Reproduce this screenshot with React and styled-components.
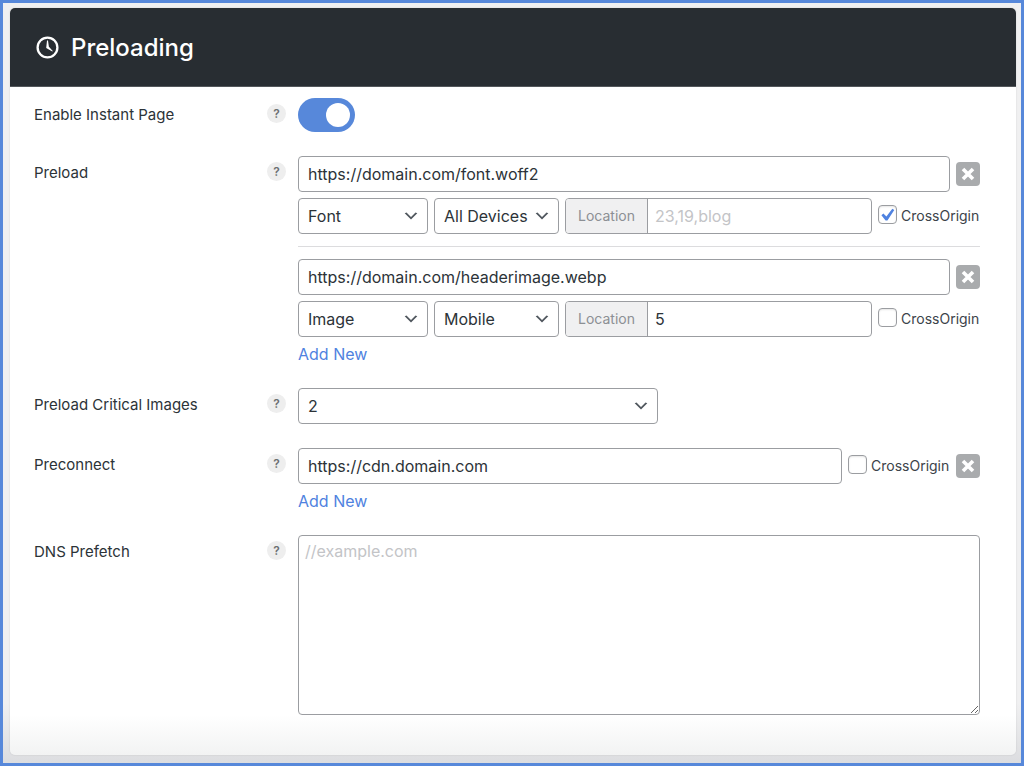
import React from "react";
import styled, { createGlobalStyle } from "styled-components";

const GlobalStyle = createGlobalStyle`
  *, *::before, *::after { box-sizing: border-box; }
  body {
    margin: 0;
    background: #f0f0f1;
    color: #2c3338;
    font-family: Inter, "Liberation Sans", sans-serif;
    font-size: 15px;
    line-height: 20px;
  }
  input, select, textarea, button { font-family: inherit; color: inherit; margin: 0; }
`;

const Frame = styled.div`
  min-height: 100vh;
  display: flex;
  border: 3px solid #5788da;
  padding: 5px 5px 8px 7px;
  background: linear-gradient(to bottom, #f0f0f1 calc(100% - 60px), #dcdde0);
`;

const Card = styled.main`
  flex: 1;
  min-width: 0;
  display: flex;
  flex-direction: column;
  border-radius: 5px;
  overflow: hidden;
  background: linear-gradient(to bottom, #fff calc(100% - 40px), #f2f3f3);
  box-shadow: 0 0 2px rgba(0, 0, 0, 0.12);
`;

const Header = styled.header`
  display: flex;
  align-items: center;
  gap: 12px;
  height: 79px;
  padding: 0 26px;
  background: #282d32;
  color: #fff;
  border-bottom: 1px solid #53575b;
`;

const Title = styled.h1`
  margin: 0;
  padding-top: 2px;
  font-size: 24px;
  line-height: 32px;
  font-weight: 500;
`;

const Settings = styled.form`
  display: flex;
  flex-direction: column;
  gap: 24px;
  padding: 11px 36px 40px 24px;
`;

const Row = styled.div`
  display: grid;
  grid-template-columns: 233px 31px minmax(0, 1fr);
  align-items: start;
`;

const RowLabel = styled.label`
  line-height: 34px;
`;

const Help = styled.button`
  width: 19px;
  height: 19px;
  margin-top: 6px;
  padding: 0;
  border: 0;
  border-radius: 50%;
  background: #eeeeee;
  color: #6b6e72;
  font-size: 12px;
  line-height: 19px;
  font-weight: 600;
`;

const Stack = styled.div`
  display: flex;
  flex-direction: column;
  align-items: stretch;
  gap: 6px;
`;

const Line = styled.div`
  display: flex;
  align-items: center;
  gap: 6px;
`;

const Divider = styled.hr`
  width: 100%;
  margin: 6px 0;
  border: 0;
  border-top: 1px solid #dcdcde;
`;

const TextInput = styled.input`
  flex: 1;
  min-width: 0;
  height: 36px;
  padding: 0 9px;
  border: 1px solid #9b9da1;
  border-radius: 4px;
  background: #fff;
  font-size: 16px;
`;

const SelectBox = styled.span`
  position: relative;
  display: block;
  width: ${(p) => p.$width};
  max-width: 100%;

  select {
    appearance: none;
    display: block;
    width: 100%;
    height: 36px;
    padding: 0 26px 0 9px;
    border: 1px solid #9b9da1;
    border-radius: 4px;
    background: #fff;
    font-size: 16px;
  }

  svg {
    position: absolute;
    right: 8px;
    top: 9px;
    pointer-events: none;
  }
`;

const LocationGroup = styled.label`
  flex: 1;
  min-width: 0;
  display: flex;
  height: 36px;
  border: 1px solid #9b9da1;
  border-radius: 4px;
  overflow: hidden;
  background: #fff;

  span {
    width: 82px;
    border-right: 1px solid #9b9da1;
    background: #f0f0f1;
    color: #8c8f94;
    font-size: 14px;
    line-height: 34px;
    text-align: center;
  }

  input {
    flex: 1;
    min-width: 0;
    padding: 0 7px;
    border: 0;
    background: transparent;
    font-size: 16px;
  }

  input::placeholder { color: #c3c4c7; }
`;

const CheckLabel = styled.label`
  display: flex;
  align-items: center;
  gap: 4px;
  width: 102px;
  color: #3c434a;
  font-size: 14px;
  white-space: nowrap;
`;

const CheckMark = styled.span`
  position: relative;
  width: 19px;
  height: 19px;
  margin-bottom: 3px;

  input {
    appearance: none;
    display: block;
    width: 19px;
    height: 19px;
    border: 1px solid #9b9da1;
    border-radius: 4px;
    background: #fff;
    box-shadow: inset 0 1px 2px rgba(0, 0, 0, 0.1);
  }

  svg {
    position: absolute;
    inset: 0;
    visibility: hidden;
    pointer-events: none;
  }

  input:checked + svg { visibility: visible; }
`;

const RemoveButton = styled.button`
  flex: none;
  display: flex;
  align-items: center;
  justify-content: center;
  width: 24px;
  height: 24px;
  padding: 0;
  border: 0;
  border-radius: 4px;
  background: #a9abad;
`;

const AddLink = styled.a`
  align-self: flex-start;
  margin-top: 1px;
  color: #4f82e0;
  font-size: 16px;
  text-decoration: none;
`;

const Toggle = styled.input`
  appearance: none;
  display: block;
  width: 57px;
  height: 34px;
  margin: 0;
  padding: 5px;
  border-radius: 17px;
  background: #b5b7ba;

  &::before {
    content: "";
    display: block;
    width: 24px;
    height: 24px;
    border-radius: 50%;
    background: #fff;
  }

  &:checked { background: #5788da; }
  &:checked::before { margin-left: auto; }
`;

const TextArea = styled.textarea`
  display: block;
  width: 100%;
  height: 180px;
  padding: 4px 6px;
  border: 1px solid #9b9da1;
  border-radius: 4px;
  background: #fff;
  font-size: 16px;
  line-height: 22px;
  resize: vertical;

  &::placeholder { color: #c3c4c7; }
`;

const ClockIcon = () => (
  <svg width="23" height="23" viewBox="0 0 23 23" aria-hidden="true">
    <circle cx="11.5" cy="11.5" r="9.9" fill="none" stroke="#fff" strokeWidth="2.3" />
    <path d="M11 4.500h1l.9 6.300 3.900 4.100-.5.600-6.100-3.600z" fill="#fff" />
  </svg>
);

const Chevron = () => (
  <svg width="18" height="18" viewBox="0 0 20 20" aria-hidden="true">
    <path d="M5 6l5 5 5-5 2 1-7 7-7-7 2-1z" fill="#50575e" />
  </svg>
);

const Select = ({ width, options, ...rest }) => (
  <SelectBox $width={width}>
    <select {...rest}>
      {options.map((o) => (
        <option key={o}>{o}</option>
      ))}
    </select>
    <Chevron />
  </SelectBox>
);

const CrossOrigin = ({ checked }) => (
  <CheckLabel>
    <CheckMark>
      <input type="checkbox" defaultChecked={checked} />
      <svg width="19" height="19" viewBox="0 0 19 19" aria-hidden="true">
        <path d="M14.300 3.800l2 1.200-6.900 10.500H7.600L3.400 10.200l2-1.700 3 3z" fill="#4f82e0" />
      </svg>
    </CheckMark>
    CrossOrigin
  </CheckLabel>
);

const Remove = () => (
  <RemoveButton type="button" aria-label="Remove">
    <svg width="14" height="14" viewBox="0 0 14 14" aria-hidden="true">
      <path d="M2 2l10 10M12 2L2 12" stroke="#fff" strokeWidth="3.6" />
    </svg>
  </RemoveButton>
);

const Field = ({ label, id, children }) => (
  <Row>
    <RowLabel htmlFor={id}>{label}</RowLabel>
    <Help type="button">?</Help>
    {children}
  </Row>
);

const PreloadItem = ({ id, url, type, device, location, checked }) => (
  <>
    <Line>
      <TextInput id={id} type="text" defaultValue={url} aria-label="URL" />
      <Remove />
    </Line>
    <Line>
      <Select width="130px" aria-label="Type" defaultValue={type} options={["Font", "Image", "Script", "Style"]} />
      <Select width="125px" aria-label="Device" defaultValue={device} options={["All Devices", "Desktop", "Mobile"]} />
      <LocationGroup>
        <span>Location</span>
        <input type="text" placeholder="23,19,blog" defaultValue={location} />
      </LocationGroup>
      <CrossOrigin checked={checked} />
    </Line>
  </>
);

export default function App() {
  return (
    <>
      <GlobalStyle />
      <Frame>
        <Card>
          <Header>
            <ClockIcon />
            <Title>Preloading</Title>
          </Header>
          <Settings>
            <Field label="Enable Instant Page" id="instant">
              <Toggle id="instant" type="checkbox" role="switch" defaultChecked />
            </Field>
            <Field label="Preload" id="preload">
              <Stack>
                <PreloadItem id="preload" url="https://domain.com/font.woff2" type="Font" device="All Devices" checked />
                <Divider />
                <PreloadItem url="https://domain.com/headerimage.webp" type="Image" device="Mobile" location="5" />
                <AddLink href="#preload">Add New</AddLink>
              </Stack>
            </Field>
            <Field label="Preload Critical Images" id="critical">
              <Select id="critical" width="360px" defaultValue="2" options={["0", "1", "2", "3", "4", "5"]} />
            </Field>
            <Field label="Preconnect" id="preconnect">
              <Stack>
                <Line>
                  <TextInput id="preconnect" type="text" defaultValue="https://cdn.domain.com" />
                  <CrossOrigin />
                  <Remove />
                </Line>
                <AddLink href="#preconnect">Add New</AddLink>
              </Stack>
            </Field>
            <Field label="DNS Prefetch" id="dns">
              <TextArea id="dns" placeholder="//example.com" />
            </Field>
          </Settings>
        </Card>
      </Frame>
    </>
  );
}
